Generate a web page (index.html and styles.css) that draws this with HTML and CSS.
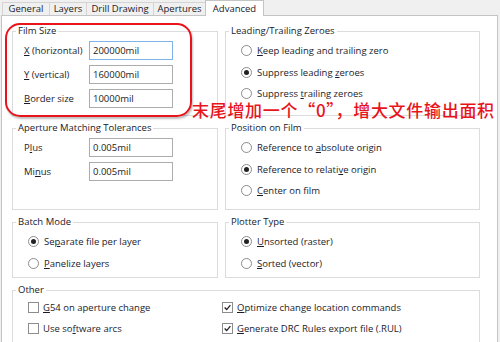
FILE: index.html
```html
<!DOCTYPE html>
<html>
<head>
    <meta charset="utf-8">
    <title>Gerber Setup - Advanced</title>
    <link rel="stylesheet" href="styles.css">
</head>
<body>
    <div class="tabs">
        <div class="tab t-general">General</div>
        <div class="tab t-layers">Layers</div>
        <div class="tab t-drill">Drill Drawing</div>
        <div class="tab t-apert">Apertures</div>
        <div class="tab t-adv active">Advanced</div>
    </div>

    <div class="panel">
        <div class="groups">
            <fieldset class="group">
                <legend>Film Size</legend>
                <div class="field"><span class="lbl"><u>X</u> (horizontal)</span><span class="input focus">200000mil</span></div>
                <div class="field"><span class="lbl"><u>Y</u> (vertical)</span><span class="input">160000mil</span></div>
                <div class="field"><span class="lbl"><u>B</u>order size</span><span class="input">10000mil</span></div>
            </fieldset>

            <fieldset class="group">
                <legend>Leading/Trailing Zeroes</legend>
                <div class="option"><span class="radio"></span><span><u>K</u>eep leading and trailing zero</span></div>
                <div class="option"><span class="radio on"></span><span>Suppress leading <u>z</u>eroes</span></div>
                <div class="option"><span class="radio"></span><span>Suppress <u>t</u>railing zeroes</span></div>
            </fieldset>

            <fieldset class="group">
                <legend>Aperture Matching Tolerances</legend>
                <div class="field"><span class="lbl">P<u>l</u>us</span><span class="input">0.005mil</span></div>
                <div class="field"><span class="lbl">Mi<u>n</u>us</span><span class="input">0.005mil</span></div>
            </fieldset>

            <fieldset class="group">
                <legend>Position on Film</legend>
                <div class="option"><span class="radio"></span><span>Reference to <u>a</u>bsolute origin</span></div>
                <div class="option"><span class="radio on"></span><span>Reference to relati<u>v</u>e origin</span></div>
                <div class="option"><span class="radio"></span><span><u>C</u>enter on film</span></div>
            </fieldset>

            <fieldset class="group">
                <legend>Batch Mode</legend>
                <div class="option"><span class="radio on"></span><span>Se<u>p</u>arate file per layer</span></div>
                <div class="option"><span class="radio"></span><span><u>P</u>anelize layers</span></div>
            </fieldset>

            <fieldset class="group">
                <legend>Plotter Type</legend>
                <div class="option"><span class="radio on"></span><span><u>U</u>nsorted (raster)</span></div>
                <div class="option"><span class="radio"></span><span><u>S</u>orted (vector)</span></div>
            </fieldset>

            <fieldset class="group other">
                <legend>Other</legend>
                <div class="checks">
                    <div class="check"><span class="box"></span><span><u>G</u>54 on aperture change</span></div>
                    <div class="check"><span class="box on"><svg viewBox="0 0 11 11"><path d="M2 5.5 L4.5 8 L9 2.5"/></svg></span><span><u>O</u>ptimize change location commands</span></div>
                    <div class="check"><span class="box"></span><span>Use so<u>f</u>tware arcs</span></div>
                    <div class="check"><span class="box on"><svg viewBox="0 0 11 11"><path d="M2 5.5 L4.5 8 L9 2.5"/></svg></span><span><u>G</u>enerate DRC Rules export file (.RUL)</span></div>
                </div>
            </fieldset>
        </div>
    </div>

    <!-- annotation drawn over the dialog -->
    <div class="mark"></div>
    <div class="note">末尾增加一个“0”，增大文件输出面积</div>
</body>
</html>
```

FILE: styles.css
```css
body{
    margin: 0;
    padding: 0;
    overflow: hidden;
    background-color: #f0f0f0;
    font-family: "Open Sans", "Noto Sans", sans-serif;
    font-size: 9.5px;
    color: #1b1b2b;}

u{text-decoration: underline; text-underline-offset: 1px;}

/* tab strip */
.tabs{
    display: flex;
    align-items: flex-end;
    height: 15px;
    padding-left: 2px;}

.tab{
    height: 13px;
    line-height: 12px;
    text-align: center;
    background-color: #f0f0f0;
    border: 1px solid #d4d4d4;
    border-bottom: none;
    margin-right: -1px;
    box-sizing: border-box;}

.t-general{width: 48px;}
.t-layers{width: 38px;}
.t-drill{width: 68px;}
.t-apert{width: 53px;}
.t-adv{width: 59px;}

.tab.active{
    height: 16px;
    line-height: 15px;
    background-color: #fff;
    border-color: #c4c4c4;
    position: relative;
    margin-bottom: -1px;
    z-index: 2;}

.panel{
    margin: 0 2px 0 1px;
    height: 340px;
    background-color: #fff;
    border: 1px solid #c4c4c4;
    box-sizing: border-box;
    padding: 9px 16px 0 10px;}

.groups{
    display: grid;
    grid-template-columns: 206px 255px;
    grid-template-rows: 91px 88px 62px 80px;
    column-gap: 7px;
    row-gap: 6px;}

.group{
    margin: 0;
    border: 1px solid #dcdcdc;
    padding: 3px 0 0 15px;
    min-width: 0;}

.group legend{
    padding: 0 2px;
    margin-left: -12px;
    line-height: 12px;
    color: #1a1a2a;}

.other{grid-column: 1 / 3;}

/* text fields */
.field{
    display: flex;
    align-items: center;
    height: 19px;
    margin-top: 5px;
    margin-left: -4px;}

.field:first-of-type{margin-top: 1px;}

.lbl{width: 65px;}

.input{
    width: 84px;
    height: 19px;
    box-sizing: border-box;
    border: 1px solid #acacac;
    padding-left: 3px;
    line-height: 17px;
    color: #222;}

.input.focus{border-color: #7eb4ea;}

/* radio buttons */
.option{
    display: flex;
    align-items: center;
    height: 21.5px;}

.radio{
    width: 11px;
    height: 11px;
    box-sizing: border-box;
    border: 1px solid #8c8c8c;
    border-radius: 50%;
    background-color: #fff;
    margin-right: 5px;
    position: relative;}

.radio.on::after{
    content: "";
    position: absolute;
    left: 2px;
    top: 2px;
    width: 5px;
    height: 5px;
    border-radius: 50%;
    background-color: #222;}

/* check boxes */
.checks{
    display: grid;
    grid-template-columns: 194px 1fr;
    margin-top: -2px;}

.check{
    display: flex;
    align-items: center;
    height: 21px;}

.box{
    width: 11px;
    height: 11px;
    box-sizing: border-box;
    border: 1px solid #8c8c8c;
    background-color: #fff;
    margin-right: 4px;}

.box svg{
    display: block;
    width: 9px;
    height: 9px;
    fill: none;
    stroke: #222;
    stroke-width: 1.6;}

/* red note */
.mark{
    position: absolute;
    left: 5px;
    top: 23px;
    width: 187px;
    height: 94px;
    box-sizing: border-box;
    border: 2px solid #e8141c;
    border-radius: 15px;
    box-shadow: 1px 2px 2px rgba(0,0,0,0.25);}

.note{
    position: absolute;
    left: 192px;
    top: 100px;
    font-family: "Noto Sans CJK SC", sans-serif;
    font-size: 17px;
    font-weight: 500;
    line-height: 20px;
    letter-spacing: 0.7px;
    color: #e8141c;
    white-space: nowrap;}
```
